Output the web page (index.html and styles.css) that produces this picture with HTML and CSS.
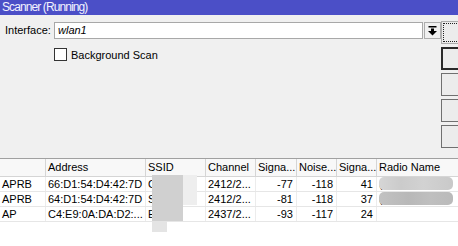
FILE: index.html
```html
<!DOCTYPE html>
<html>
<head>
<meta charset="utf-8">
<title>Scanner</title>
<link rel="stylesheet" href="styles.css">
</head>
<body>
<div class="win">
	<div class="title">Scanner (Running)</div>
	<div class="top">
		<div class="form">
			<div class="field">
				<span class="lbl">Interface:</span>
				<div class="input">wlan1</div>
				<div class="drop">
					<svg width="15" height="15" viewBox="0 0 15 15">
						<rect x="3.5" y="3" width="8" height="1.5" fill="#000"/>
						<rect x="6" y="5.5" width="3" height="2.5" fill="#000"/>
						<polygon points="3,8 12,8 7.5,12.5" fill="#000"/>
					</svg>
				</div>
			</div>
			<div class="check">
				<span class="box"></span>
				<span>Background Scan</span>
			</div>
		</div>
		<div class="buttons">
			<div class="btn focus"><span></span></div>
			<div class="btn def"></div>
			<div class="btn"></div>
			<div class="btn"></div>
			<div class="btn"></div>
		</div>
	</div>
	<div class="list">
		<div class="row head">
			<div class="c"></div>
			<div class="c">Address</div>
			<div class="c">SSID</div>
			<div class="c">Channel</div>
			<div class="c">Signa...</div>
			<div class="c">Noise...</div>
			<div class="c">Signa...</div>
			<div class="c">Radio Name</div>
		</div>
		<div class="row">
			<div class="c">APRB</div>
			<div class="c">66:D1:54:D4:42:7D</div>
			<div class="c">C</div>
			<div class="c">2412/2...</div>
			<div class="c num">-77</div>
			<div class="c num">-118</div>
			<div class="c num">41</div>
			<div class="c">(</div>
		</div>
		<div class="row">
			<div class="c">APRB</div>
			<div class="c">64:D1:54:D4:42:7D</div>
			<div class="c">S</div>
			<div class="c">2412/2...</div>
			<div class="c num">-81</div>
			<div class="c num">-118</div>
			<div class="c num">37</div>
			<div class="c">(</div>
		</div>
		<div class="row">
			<div class="c">AP</div>
			<div class="c">C4:E9:0A:DA:D2:...</div>
			<div class="c">E</div>
			<div class="c">2437/2...</div>
			<div class="c num">-93</div>
			<div class="c num">-117</div>
			<div class="c num">24</div>
			<div class="c"></div>
		</div>
		<!-- blurred names -->
		<div class="blur ssid1"></div>
		<div class="blur ssid2"></div>
		<div class="blur ssid3"></div>
		<div class="blur radio1"></div>
		<div class="blur radio2"></div>
	</div>
</div>
</body>
</html>
```

FILE: styles.css
```css
*{margin:0;padding:0;box-sizing:border-box;}
body{background:#fff;font-family:"Liberation Sans",Arial,sans-serif;font-size:11px;color:#000;overflow:hidden;}
.win{width:458px;height:246px;overflow:hidden;}
.title{height:15px;line-height:15px;background:#4b4fc7;color:#f2f2ff;font-size:12px;letter-spacing:-0.9px;padding-left:2px;}
.top{height:144px;background:#f0f0f0;border-bottom:1px solid #a0a0a0;display:flex;}
.form{width:452px;padding-top:7px;}
.field{display:flex;height:17px;align-items:center;}
.lbl{width:54px;padding-left:5px;line-height:17px;}
.input{width:369px;height:17px;border:1px solid #a8a8a8;background:#fff;font-style:italic;line-height:15px;padding-left:3px;}
.drop{width:17px;height:17px;margin-left:1px;border:1px solid #adadad;background:#f0f0f0;}
.drop svg{display:block;}
.check{display:flex;align-items:center;margin-top:9px;padding-left:54px;height:13px;}
.box{width:13px;height:13px;border:1px solid #333;background:#fff;margin-right:4px;}
.buttons{padding-top:6px;display:flex;flex-direction:column;gap:3px;}
.btn{width:80px;height:23px;border:1px solid #707070;background:#ececec;}
.btn.def{border:2px solid #2a2a2a;}
.btn.focus{border:1px solid #adadad;padding:1px;}
.btn.focus span{display:block;height:100%;border:1px dotted #222;}
.list{position:relative;background:#fff;}
.row{display:grid;grid-template-columns:46px 100px 60px 50px 41px 40px 40px 1fr;height:15px;border-bottom:1px solid #e6e6e6;}
.row.head{height:18px;border-bottom:1px solid #d5d5d5;background:#f8f8f8;}
.c{border-right:1px solid #ececec;padding:0 2px;line-height:15px;white-space:nowrap;overflow:hidden;}
.head .c{border-right:1px solid #d5d5d5;line-height:17px;}
.c:last-child{border-right:none;}
.num{text-align:right;padding-right:3px;}
.blur{position:absolute;}
.ssid1{left:152px;top:16px;width:31px;height:46px;background:#d0d0d0;}
.ssid2{left:152px;top:62px;width:15px;height:11px;background:#e4e4e4;}
.ssid3{left:183px;top:16px;width:14px;height:30px;background:#eeeeee;}
.radio1{left:379px;top:18px;width:74px;height:13px;border-radius:5px;background:linear-gradient(90deg,#d6d6d6,#cbcbcb 30%,#d2d2d2 60%,#c9c9c9);}
.radio2{left:379px;top:33px;width:74px;height:13px;border-radius:5px;background:linear-gradient(90deg,#c2c2c2,#b8b8b8 40%,#bfbfbf 70%,#bababa);}
```
